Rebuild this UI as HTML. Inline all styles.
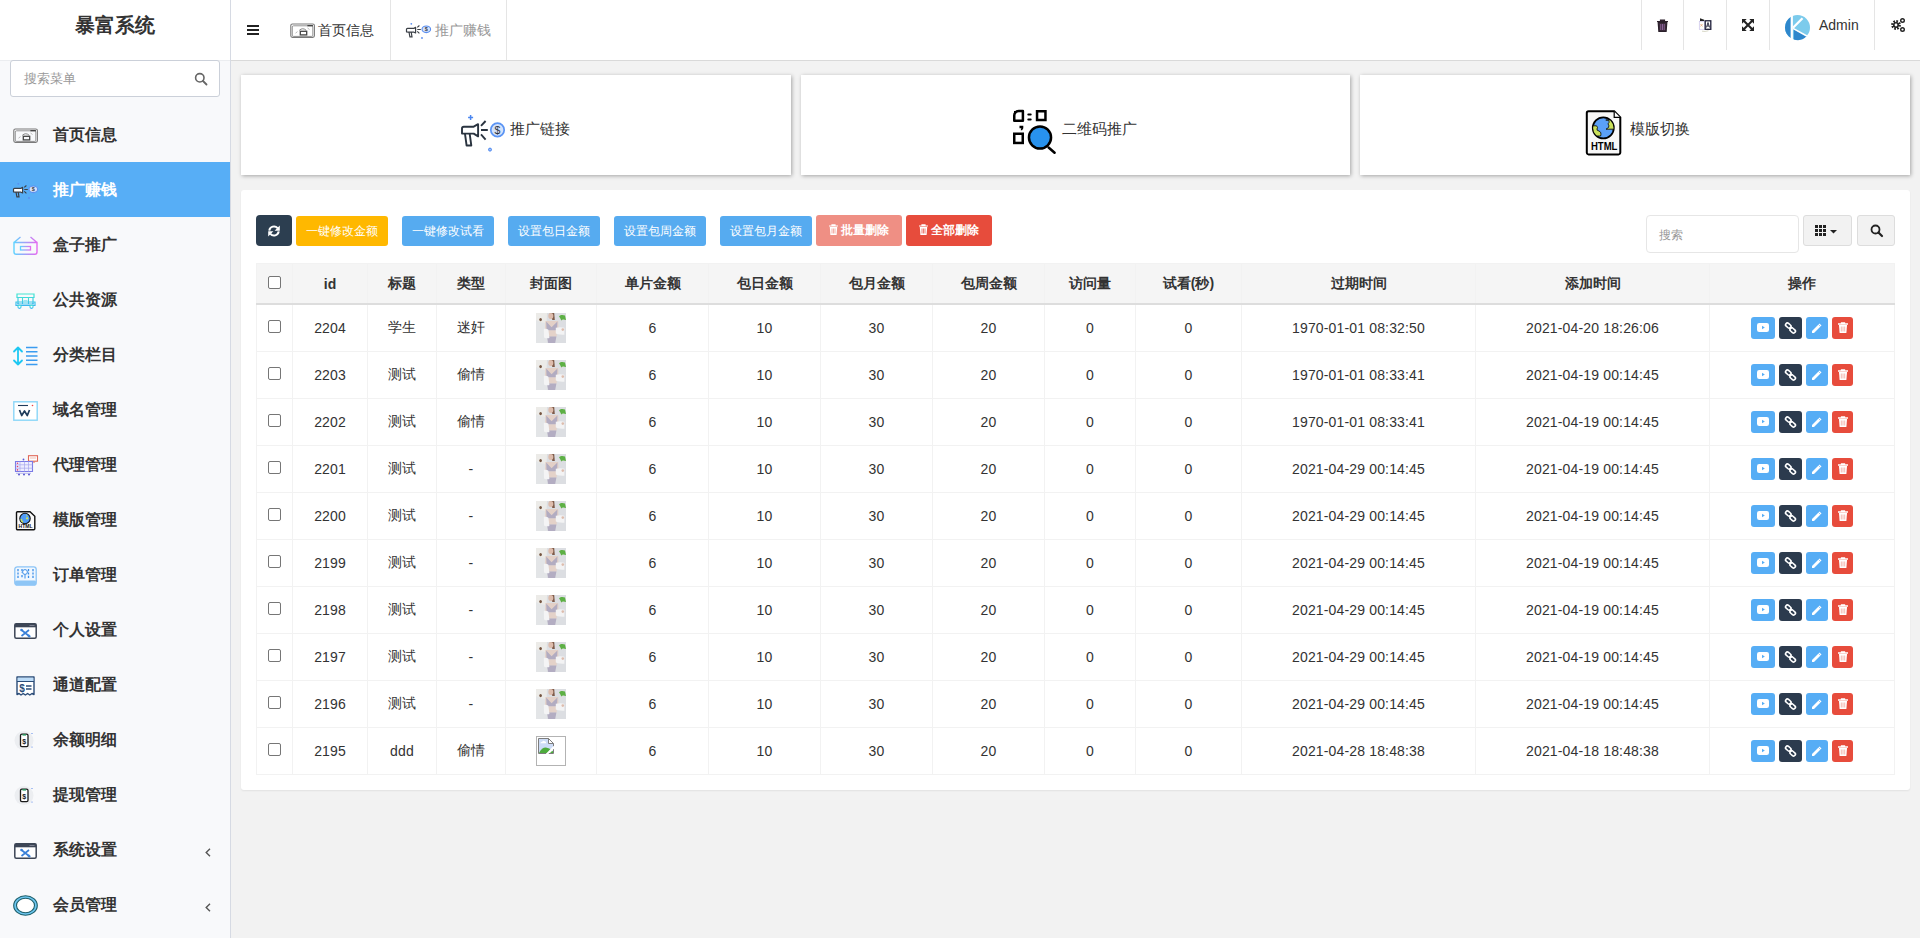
<!DOCTYPE html><html><head><meta charset="utf-8"><title>暴富系统</title><style>
*{box-sizing:border-box;margin:0;padding:0}
html,body{width:1920px;height:938px;overflow:hidden}
body{font-family:"Liberation Sans",sans-serif;background:#f2f2f2;color:#333;font-size:14px;position:relative}
.a{position:absolute}
svg{position:absolute;overflow:visible}
#side{position:absolute;left:0;top:0;width:231px;height:938px;background:#f8f9fb;border-right:1px solid #d6dae3}
#logo{position:absolute;left:0;top:0;width:230px;height:61px;border-bottom:1px solid #ebedf0;background:#fff;text-align:center;font-weight:bold;font-size:20px;line-height:50px;color:#333}
#msearch{position:absolute;left:10px;top:60px;width:210px;height:37px;border:1px solid #cbd0d9;border-radius:3px;background:#fff;font-size:13px;color:#999;padding-left:13px;line-height:35px}
.mi{position:absolute;left:0;width:230px;height:55px;font-size:16px;font-weight:bold;color:#333;line-height:55px;padding-left:53px;white-space:nowrap}
.mi.act{background:#57aef6;color:#fff}
.arr{position:absolute;left:203px;top:0;font-weight:normal;color:#666;font-size:13px}
#hdr{position:absolute;left:231px;top:0;width:1689px;height:61px;background:#fff;border-bottom:1px solid #d9d9d9}
.sep{position:absolute;top:0;width:1px;height:50px;background:#e5e5e5}
.tab{position:absolute;top:0;line-height:60px;font-size:14px;white-space:nowrap}
.card{position:absolute;top:75px;height:100px;background:#fff;box-shadow:1px 1px 4px rgba(0,0,0,.32)}
.card .lbl{position:absolute;font-size:15px;color:#333;top:44px;line-height:20px;white-space:nowrap}
#panel{position:absolute;left:241px;top:190px;width:1669px;height:600px;background:#fff;border-radius:3px;box-shadow:0 1px 2px rgba(0,0,0,.07)}
.btn{position:absolute;top:216px;height:30px;color:#fff;font-size:12px;line-height:30px;text-align:center;border-radius:3px;white-space:nowrap}
table{position:absolute;left:256px;top:263px;border-collapse:collapse;table-layout:fixed}
th,td{border:1px solid #f2f2f2;text-align:center;vertical-align:middle;padding:0;white-space:nowrap}
th{background:#f5f5f5;height:40px;padding-top:2px;font-weight:bold;font-size:14px;border-bottom:2px solid #dddddd;color:#333}
tr.r1 td{height:48px}
td{height:47px;font-size:14px;color:#333;letter-spacing:.15px}
.cb{display:inline-block;width:13px;height:13px;border:1px solid #767676;border-radius:2px;background:#fff;vertical-align:middle;position:relative;top:-3px}
.th{display:inline-block;width:30px;height:30px;vertical-align:middle;position:relative}
.tr{display:inline-block;width:9px;height:11px;margin-right:3px;vertical-align:-1px;position:relative}
.tr svg{left:0;top:0}
.ab{display:inline-block;width:24px;height:22px;border-radius:2px;vertical-align:middle;margin:0 1px;position:relative}
</style></head><body>
<div id="side"><div id="logo">暴富系统</div>
<div id="msearch">搜索菜单<svg style="left:183px;top:11px" width="14" height="14" viewBox="0 0 14 14"><circle cx="5.8" cy="5.8" r="4.2" fill="none" stroke="#666" stroke-width="1.6"/><path d="M9 9l3.5 3.5" stroke="#666" stroke-width="1.8" stroke-linecap="round"/></svg></div>
<div class="mi" style="top:107px"><svg style="left:12px;top:20px" width="27" height="18" viewBox="289 22 27 18"><rect x="290.8" y="24" width="23.6" height="13.4" rx="1.6" fill="none" stroke="#7a7a7a" stroke-width="1.1"/><rect x="292.3" y="25.8" width="20.5" height="10.6" rx="1.2" fill="none" stroke="#8a8a8a" stroke-width="0.9"/><rect x="307.4" y="25" width="5.5" height="1.3" fill="#444"/><path d="M299.3 30.3Q302.7 27.2 306.2 30.3" fill="none" stroke="#777" stroke-width="0.9"/><rect x="300.3" y="31.3" width="6.4" height="3.6" fill="none" stroke="#444" stroke-width="1.3"/><path d="M295.5 33.2l2-1.6M307.5 28l2 1.5" stroke="#aaa" stroke-width=".8"/></svg>首页信息</div>
<div class="mi act" style="top:162px"><svg style="left:12px;top:20px" width="27" height="18" viewBox="405 22 27 18"><path d="M406.5 31.8V29.3a1 1 0 0 1 1-1H414l1.6-1v5.6l-1.6-.7H408.5z" fill="#fff" stroke="#3a3f46" stroke-width="1.2" stroke-linejoin="round"/><path d="M409 32l.9 4.8h2.1l-.8-4.8" fill="none" stroke="#3a3f46" stroke-width="1.2"/><path d="M417.3 27.4l2.1-1.9M417.3 29.5h3.5M417.3 31.4l2.1 2" stroke="#3a3f46" stroke-width="1.1"/><ellipse cx="426.3" cy="29.3" rx="4.3" ry="3.3" fill="#d6e3fb" stroke="#5a8ef0" stroke-width="1.1"/><text x="426.3" y="31.3" font-size="5.5" font-weight="bold" text-anchor="middle" fill="#3a3f46" font-family="Liberation Sans">$</text><circle cx="411.3" cy="23.8" r=".9" fill="#5a8ef0"/><circle cx="422" cy="38" r=".9" fill="#5a8ef0"/></svg>推广赚钱</div>
<div class="mi" style="top:217px"><svg style="left:13px;top:19px" width="25" height="19" viewBox="0 0 25 19"><defs><linearGradient id="g1" x1="0" x2="1"><stop offset="0" stop-color="#5fd3ff"/><stop offset="1" stop-color="#e46af0"/></linearGradient></defs><path d="M1 6.5l6.5-5.5M24 6.5l-6.5-5.5M1 6.5h23v9.5a2.2 2.2 0 0 1-2.2 2.2H3.2A2.2 2.2 0 0 1 1 16z" fill="none" stroke="url(#g1)" stroke-width="1.4"/><rect x="7.5" y="10.5" width="10" height="3.5" fill="none" stroke="url(#g1)" stroke-width="1.3"/></svg>盒子推广</div>
<div class="mi" style="top:272px"><svg style="left:15px;top:21px" width="21" height="16" viewBox="0 0 21 16"><defs><linearGradient id="g2" x1="0" x2="0" y1="0" y2="1"><stop offset="0" stop-color="#44e6d0"/><stop offset="1" stop-color="#3cb8f0"/></linearGradient></defs><path d="M2 1h17v3.5H2zM3 4.5h15V11H3zM1 9h19v3.5H1z" fill="none" stroke="url(#g2)" stroke-width="1.2"/><path d="M7.5 4.5V11M13.5 4.5V11" stroke="url(#g2)" stroke-width="1.1"/><circle cx="4.5" cy="13.8" r="1.6" fill="#fff" stroke="url(#g2)" stroke-width="1.1"/><circle cx="16.5" cy="13.8" r="1.6" fill="#fff" stroke="url(#g2)" stroke-width="1.1"/><rect x="8.5" y="7" width="4" height="4" fill="#9ee3f2"/><circle cx="3" cy="10.8" r=".7" fill="#3cb8f0"/><circle cx="18" cy="10.8" r=".7" fill="#3cb8f0"/></svg>公共资源</div>
<div class="mi" style="top:327px"><svg style="left:13px;top:19px" width="25" height="20" viewBox="0 0 25 20"><path d="M5 1.5v17M1 5.5l4-4 4 4M1 14.5l4 4 4-4" fill="none" stroke="#1ec8f2" stroke-width="1.8" stroke-linecap="round" stroke-linejoin="round"/><path d="M13 1.5h11.5M13 5.8h11.5M13 10h11.5M13 14.2h11.5M13 18.5h11.5" stroke="#3a9cf0" stroke-width="1.5"/></svg>分类栏目</div>
<div class="mi" style="top:382px"><svg style="left:13px;top:19px" width="25" height="20" viewBox="0 0 25 20"><rect x="0.8" y="0.8" width="23.4" height="18.4" fill="#fff" stroke="#8ad6f8" stroke-width="1.4"/><path d="M5 4.5h10" stroke="#1f3b5a" stroke-width="1.1"/><circle cx="19.5" cy="4.5" r=".8" fill="#e44"/><path d="M6.5 9l2.2 5.5 2.8-4.5 2.8 4.5 2.2-5.5" fill="none" stroke="#1f3b5a" stroke-width="1.7" stroke-linejoin="round"/></svg>域名管理</div>
<div class="mi" style="top:437px"><svg style="left:14px;top:18px" width="24" height="21" viewBox="0 0 24 21"><rect x="14.5" y="0.7" width="9" height="5.5" fill="#fff" stroke="#e06858" stroke-width="1.1"/><path d="M16 3h6" stroke="#e9a090" stroke-width=".7"/><path d="M18 6.5v1.5M20 6.5v1.5" stroke="#e06858" stroke-width="1"/><path d="M1.5 6.5h17v10h-17z" fill="#eef" stroke="#7a7ae6" stroke-width="1.1"/><path d="M1.5 9.8h17M1.5 13.2h17M6 6.5v10M10.5 6.5v10M14.5 6.5v10" stroke="#a8a8ee" stroke-width="0.7"/><circle cx="3.5" cy="8.2" r=".8" fill="#e04070"/><circle cx="3.5" cy="11.5" r=".8" fill="#e04070"/><circle cx="3.5" cy="14.9" r=".8" fill="#e04070"/><circle cx="9.5" cy="4.5" r=".9" fill="#5a5ad8"/><circle cx="5" cy="19.5" r="1" fill="#5555d0"/><circle cx="10" cy="19.5" r="1" fill="#5555d0"/><circle cx="15" cy="19.5" r="1" fill="#5555d0"/><path d="M2 18.3h15" stroke="#9a9ae8" stroke-width=".7"/></svg>代理管理</div>
<div class="mi" style="top:492px"><svg style="left:15px;top:19px" width="21" height="20" viewBox="0 0 21 20"><path d="M1.5 1.8a1 1 0 0 1 1-1H15l4.8 4.5v12.4a1 1 0 0 1-1 1H2.5a1 1 0 0 1-1-1z" fill="#fafafa" stroke="#111" stroke-width="1.4"/><circle cx="10" cy="7.5" r="5.2" fill="#4f9cf8" stroke="#111" stroke-width="1.1"/><path d="M11 3.5c2 .3 1.5 2.5.5 2.5 2 0 2.5 2.2.8 2.6l-1.5-.6c0-1.5 1.4-1.2 1-2.4zM5.5 8c1.5-.5 2 .6 1.6 1.5 1 0 1.5 1.5 1 2.3C6.5 11.5 5.4 10 5.5 8z" fill="#c8e060"/><text x="10.5" y="17.3" font-size="5" font-weight="bold" text-anchor="middle" fill="#111" font-family="Liberation Sans">HTML</text></svg>模版管理</div>
<div class="mi" style="top:547px"><svg style="left:14px;top:19px" width="23" height="20" viewBox="0 0 23 20"><rect x="0.8" y="0.8" width="21.4" height="18.4" rx="2.5" fill="#f0f7fe" stroke="#8cc4f6" stroke-width="1.3"/><rect x="1" y="14.5" width="21" height="4.8" rx="1.5" fill="#8ec6f6"/><path d="M4 3v9M8 3v4M8 9v3M14.5 3v9M19 3v9" stroke="#3a8ee8" stroke-width="1.3" stroke-dasharray="2.2 1.2"/><circle cx="11" cy="6" r="2.4" fill="#fff" stroke="#3a8ee8" stroke-width="1"/><path d="M11 8.5v4" stroke="#3a8ee8" stroke-width="1"/></svg>订单管理</div>
<div class="mi" style="top:602px"><svg style="left:14px;top:21px" width="23" height="16" viewBox="0 0 23 16"><rect x="0.8" y="0.8" width="21.4" height="14.4" rx="1.5" fill="#fff" stroke="#3d4656" stroke-width="1.5"/><rect x="0.8" y="0.8" width="21.4" height="3.5" fill="#3d4656"/><path d="M15.5 2.5h5" stroke="#aab" stroke-width=".6"/><path d="M7.5 7l7.5 6M15 7l-7.5 6" stroke="#3a80d8" stroke-width="1.7"/><circle cx="7.5" cy="7" r="1.3" fill="#3a80d8"/><path d="M14 12l2 2" stroke="#3a80d8" stroke-width="2.4"/></svg>个人设置</div>
<div class="mi" style="top:657px"><svg style="left:16px;top:19px" width="19" height="20" viewBox="0 0 19 20"><path d="M1 1h17v17.5l-2-1-2.2 1.5-2.2-1.5-2.2 1.5-2.2-1.5-2.2 1.5L3 17.5 1 18.5z" fill="#fff" stroke="#2a4c78" stroke-width="1.4" stroke-linejoin="round"/><rect x="1.7" y="1.7" width="15.6" height="3.6" fill="#bcdcf8"/><path d="M1 5.5h17" stroke="#2a4c78" stroke-width="1"/><text x="6" y="15.5" font-size="10" font-weight="bold" text-anchor="middle" fill="#2a4c78" font-family="Liberation Sans">$</text><path d="M10 10h5.5M10 13h5.5" stroke="#2a4c78" stroke-width="1.4"/></svg>通道配置</div>
<div class="mi" style="top:712px"><svg style="left:14px;top:19px" width="22" height="19" viewBox="0 0 22 19"><circle cx="10" cy="9.5" r="9.5" fill="#eceef1"/><rect x="6.5" y="3.2" width="7.5" height="12.5" rx="1.4" fill="#fff" stroke="#1a1a1a" stroke-width="1.3"/><rect x="8.5" y="3.2" width="3.5" height="1.4" fill="#28a060"/><text x="10.3" y="12.8" font-size="7" font-weight="bold" text-anchor="middle" fill="#1a1a1a" font-family="Liberation Sans">$</text><circle cx="18" cy="2.5" r=".6" fill="#4a7be6"/><circle cx="18" cy="16" r=".6" fill="#4a7be6"/></svg>余额明细</div>
<div class="mi" style="top:767px"><svg style="left:14px;top:19px" width="22" height="19" viewBox="0 0 22 19"><circle cx="10" cy="9.5" r="9.5" fill="#eceef1"/><rect x="6.5" y="3.2" width="7.5" height="12.5" rx="1.4" fill="#fff" stroke="#1a1a1a" stroke-width="1.3"/><rect x="8.5" y="3.2" width="3.5" height="1.4" fill="#28a060"/><text x="10.3" y="12.8" font-size="7" font-weight="bold" text-anchor="middle" fill="#1a1a1a" font-family="Liberation Sans">$</text><circle cx="18" cy="2.5" r=".6" fill="#4a7be6"/><circle cx="18" cy="16" r=".6" fill="#4a7be6"/></svg>提现管理</div>
<div class="mi" style="top:822px"><svg style="left:14px;top:21px" width="23" height="16" viewBox="0 0 23 16"><rect x="0.8" y="0.8" width="21.4" height="14.4" rx="1.5" fill="#fff" stroke="#3d4656" stroke-width="1.5"/><rect x="0.8" y="0.8" width="21.4" height="3.5" fill="#3d4656"/><path d="M15.5 2.5h5" stroke="#aab" stroke-width=".6"/><path d="M7.5 7l7.5 6M15 7l-7.5 6" stroke="#3a80d8" stroke-width="1.7"/><circle cx="7.5" cy="7" r="1.3" fill="#3a80d8"/><path d="M14 12l2 2" stroke="#3a80d8" stroke-width="2.4"/></svg>系统设置<svg style="left:205px;top:26px" width="6" height="9" viewBox="0 0 6 9"><path d="M5 .8L1.2 4.5 5 8.2" fill="none" stroke="#555" stroke-width="1.4"/></svg></div>
<div class="mi" style="top:877px"><svg style="left:13px;top:18px" width="25" height="21" viewBox="0 0 25 21"><ellipse cx="12.5" cy="10.5" rx="11.8" ry="9.8" fill="#6cc6f0" stroke="#1f5f6a" stroke-width="1.1"/><ellipse cx="12.5" cy="10.5" rx="9" ry="7.2" fill="#fff" stroke="#1f5f6a" stroke-width="1.1"/></svg>会员管理<svg style="left:205px;top:26px" width="6" height="9" viewBox="0 0 6 9"><path d="M5 .8L1.2 4.5 5 8.2" fill="none" stroke="#555" stroke-width="1.4"/></svg></div>
</div>
<div id="hdr"></div>
<svg style="left:247px;top:25px" width="12" height="10" viewBox="0 0 12 10"><path d="M0 1h12M0 5h12M0 9h12" stroke="#222" stroke-width="1.9"/></svg>
<svg style="left:289px;top:22px" width="27" height="18" viewBox="289 22 27 18"><rect x="290.8" y="24" width="23.6" height="13.4" rx="1.6" fill="none" stroke="#7a7a7a" stroke-width="1.1"/><rect x="292.3" y="25.8" width="20.5" height="10.6" rx="1.2" fill="none" stroke="#8a8a8a" stroke-width="0.9"/><rect x="307.4" y="25" width="5.5" height="1.3" fill="#444"/><path d="M299.3 30.3Q302.7 27.2 306.2 30.3" fill="none" stroke="#777" stroke-width="0.9"/><rect x="300.3" y="31.3" width="6.4" height="3.6" fill="none" stroke="#444" stroke-width="1.3"/><path d="M295.5 33.2l2-1.6M307.5 28l2 1.5" stroke="#aaa" stroke-width=".8"/></svg>
<div class="tab" style="left:318px;color:#333">首页信息</div>
<div class="sep" style="left:390px;height:60px"></div>
<svg style="left:405px;top:22px" width="27" height="18" viewBox="405 22 27 18"><path d="M406.5 31.8V29.3a1 1 0 0 1 1-1H414l1.6-1v5.6l-1.6-.7H408.5z" fill="none" stroke="#3a3f46" stroke-width="1.2" stroke-linejoin="round"/><path d="M409 32l.9 4.8h2.1l-.8-4.8" fill="none" stroke="#3a3f46" stroke-width="1.2"/><path d="M417.3 27.4l2.1-1.9M417.3 29.5h3.5M417.3 31.4l2.1 2" stroke="#3a3f46" stroke-width="1.1"/><ellipse cx="426.3" cy="29.3" rx="4.3" ry="3.3" fill="#d6e3fb" stroke="#5a8ef0" stroke-width="1.1"/><text x="426.3" y="31.3" font-size="5.5" font-weight="bold" text-anchor="middle" fill="#3a3f46" font-family="Liberation Sans">$</text><circle cx="411.3" cy="23.8" r=".9" fill="#5a8ef0"/><circle cx="422" cy="38" r=".9" fill="#5a8ef0"/></svg>
<div class="tab" style="left:435px;color:#999">推广赚钱</div>
<div class="sep" style="left:506px;height:60px"></div>
<div class="sep" style="left:1641px"></div>
<div class="sep" style="left:1683px"></div>
<div class="sep" style="left:1726px"></div>
<div class="sep" style="left:1769px"></div>
<div class="sep" style="left:1874px"></div>
<svg style="left:1657px;top:19px" width="11" height="13" viewBox="0 0 11 13"><path d="M0 2.5h11M3.5 2.5V1h4v1.5M1.2 3.5h8.6l-.7 9H1.9z" fill="#3a2a3a" stroke="#2a1f2a" stroke-width="1.2"/><path d="M3.8 5v6M5.5 5v6M7.2 5v6" stroke="#a070b0" stroke-width=".8"/></svg>
<svg style="left:1697px;top:16px" width="17" height="18" viewBox="1697 16 17 18"><rect x="1699.3" y="21.3" width="5.5" height="8" fill="#fff" stroke="#c9c2ea" stroke-width=".7"/><path d="M1700.5 24l2 2.5M1702.5 24l-2 2.5" stroke="#e7a070" stroke-width=".7"/><path d="M1700 18.2l4.2 1.6v1.2H1700z" fill="#222"/><rect x="1705.2" y="20.8" width="5.6" height="8.5" fill="#fff" stroke="#1d1d38" stroke-width="1.3"/><path d="M1706.4 27.5l1.6-5 1.6 5M1707 26h2" fill="none" stroke="#1d1d38" stroke-width=".9"/><path d="M1702 31.2q3 .8 6.5-.5" fill="none" stroke="#c8c8b0" stroke-width=".7"/></svg>
<svg style="left:1742px;top:19px" width="12" height="12" viewBox="0 0 14 14"><path d="M1.5 1.5l11 11M12.5 1.5l-11 11" stroke="#222" stroke-width="2.4"/><path d="M0 0h5.5L0 5.5zM14 0H8.5l5.5 5.5zM0 14h5.5L0 8.5zM14 14H8.5l5.5-5.5z" fill="#222"/></svg>
<svg style="left:1785px;top:15px" width="25" height="25" viewBox="0 0 25 25"><circle cx="12.5" cy="12.5" r="12.5" fill="#7ccbec"/><path d="M5.8 1.95A12.5 12.5 0 0 0 5.8 23.05z" fill="#2e87cc"/><path d="M8.8 14.2L21.5 21.3A12.5 12.5 0 0 1 8.8 24.45z" fill="#2e87cc"/><path d="M6.8 1v23.5" stroke="#fff" stroke-width="2.2"/><path d="M8 12.8L17.5 3.2" stroke="#fff" stroke-width="2.2"/><path d="M8 13.4L21.8 21" stroke="#fff" stroke-width="1.6"/></svg>
<div class="tab" style="left:1819px;top:-5px;color:#333;font-size:14px">Admin</div>
<svg style="left:1890px;top:17px" width="16" height="16" viewBox="0 0 16 16"><circle cx="6" cy="8" r="3.6" fill="none" stroke="#222" stroke-width="2.6" stroke-dasharray="1.6 1.2"/><circle cx="6" cy="8" r="2.2" fill="none" stroke="#222" stroke-width="1.6"/><circle cx="12.5" cy="3.5" r="1.8" fill="none" stroke="#222" stroke-width="1.4"/><circle cx="12.5" cy="12.5" r="1.8" fill="none" stroke="#222" stroke-width="1.4"/></svg>
<div class="card" style="left:241px;width:550px"></div>
<svg style="left:459px;top:113px" width="48" height="40" viewBox="459 113 48 40"><path d="M462 133.6V128.5a1.8 1.8 0 0 1 1.8-1.8h9.9l4.4-2.5v12.2l-4.4-2.8z" fill="none" stroke="#2a3440" stroke-width="1.9" stroke-linejoin="round"/><path d="M465 133.8l1.6 11.7h4.7l-1.6-11.7" fill="none" stroke="#2a3440" stroke-width="1.9" stroke-linejoin="round"/><path d="M481 125.9l4.6-4.9M481 130h6.8M481 134.4l4.6 5.2" stroke="#2a3440" stroke-width="1.9"/><circle cx="497.5" cy="129.9" r="6.7" fill="#d3e2fb" stroke="#5a94f4" stroke-width="1.7"/><text x="497.5" y="133.6" font-size="10.5" text-anchor="middle" fill="#2a3440" font-family="Liberation Sans">$</text><path d="M470.6 115v5M468.1 117.4h5" stroke="#4a86f0" stroke-width="1.5"/><circle cx="490" cy="149.6" r="1.5" fill="#9ec0f8" stroke="#4a86f0" stroke-width="1"/></svg>
<div class="card" style="left:801px;width:549px"></div>
<svg style="left:1012px;top:109px" width="46" height="46" viewBox="-1 -1 46 46"><path d="M1.25 10.75V5.5A4.5 4.5 0 0 1 5.75 1H9.9v9.75z" fill="none" stroke="#000" stroke-width="2.5" stroke-linejoin="round"/><path d="M1 6A5 5 0 0 1 6 1L1 1z" fill="#000"/><path d="M15.3 4.6h2.4M15.3 9.4h2.4" stroke="#000" stroke-width="2" stroke-linecap="round"/><rect x="24.05" y="1.25" width="8.4" height="8.75" fill="none" stroke="#000" stroke-width="2.5"/><path d="M6.5 15.7h3.8v2.6l-1.2 2h-1.4l.6-2H6.5z" fill="#000"/><rect x="1.25" y="23.75" width="8.5" height="9.2" fill="none" stroke="#000" stroke-width="2.5"/><circle cx="27" cy="27.5" r="11.05" fill="#2892ee" stroke="#000" stroke-width="2.5"/><path d="M35.6 37.5l6 5.2" stroke="#000" stroke-width="2.5" stroke-linecap="round"/></svg>
<div class="card" style="left:1360px;width:550px"></div>
<svg style="left:1584px;top:109px" width="40" height="48" viewBox="1584 109 40 48"><path d="M1586.8 113a1.8 1.8 0 0 1 1.8-1.8h25.6l6.1 6.1v35.3a1.8 1.8 0 0 1-1.8 1.8h-29.9a1.8 1.8 0 0 1-1.8-1.8z" fill="#f7f7f7" stroke="#000" stroke-width="2"/><path d="M1614.2 111.5v5.8h5.8" fill="#fff" stroke="#000" stroke-width="1.2"/><circle cx="1603.3" cy="127.9" r="10.5" fill="#5aa0f8" stroke="#000" stroke-width="1.8"/><clipPath id="gcl"><circle cx="1603.3" cy="127.9" r="10.2"/></clipPath><g clip-path="url(#gcl)"><path d="M1605.8 120Q1609.5 119.8 1609 122.5Q1607 124 1608.8 125.2Q1610 127.5 1606 129.2L1616 129.2L1616 120z" fill="#c9e05a" stroke="#111" stroke-width=".9"/><path d="M1591 125.8L1596.5 125.8Q1598.3 127.5 1597 129Q1596.6 130.6 1599 131Q1601.8 132.2 1600.6 136L1591 136z" fill="#c9e05a" stroke="#111" stroke-width=".9"/></g><text x="1604.2" y="150.4" font-size="10" font-weight="bold" text-anchor="middle" fill="#000" font-family="Liberation Sans" textLength="26.5" lengthAdjust="spacingAndGlyphs">HTML</text></svg>
<div class="a" style="left:1630px;top:119px;font-size:15px;line-height:20px;white-space:nowrap">模版切换</div>
<div class="a" style="left:1062px;top:119px;font-size:15px;line-height:20px;white-space:nowrap">二维码推广</div>
<div class="a" style="left:510px;top:119px;font-size:15px;line-height:20px;white-space:nowrap">推广链接</div>
<div id="panel"></div>
<div class="btn" style="left:256px;top:215px;width:36px;height:31px;background:#2c3e50;border-radius:4px"><svg style="left:12px;top:10px" width="12" height="12" viewBox="0 0 12 12"><path d="M1.3 5.6A4.7 4.7 0 0 1 9.6 3.2M10.7 6.4A4.7 4.7 0 0 1 2.4 8.8" fill="none" stroke="#fff" stroke-width="2"/><path d="M11.8 0.6V5.8H6.6zM0.2 11.4V6.2H5.4z" fill="#fff"/></svg></div>
<div class="btn" style="left:296px;width:92px;background:#ffb800;top:216px;height:30px;line-height:30px">一键修改金额</div>
<div class="btn" style="left:402px;width:92px;background:#56abf0;top:216px;height:30px;line-height:30px">一键修改试看</div>
<div class="btn" style="left:508px;width:92px;background:#56abf0;top:216px;height:30px;line-height:30px">设置包日金额</div>
<div class="btn" style="left:614px;width:92px;background:#56abf0;top:216px;height:30px;line-height:30px">设置包周金额</div>
<div class="btn" style="left:720px;width:92px;background:#56abf0;top:216px;height:30px;line-height:30px">设置包月金额</div>
<div class="btn" style="left:816px;width:86px;background:#ef8f84;top:215px;height:31px;line-height:31px"><b style="font-weight:bold"><b class="tr"><svg width="9" height="11" viewBox="0 0 9 11"><path d="M0 2h9M3 2V.8h3V2" stroke="#fff" stroke-width="1.2" fill="none"/><path d="M.8 3h7.4l-.6 8H1.4z" fill="#fff"/><path d="M3 4.5v5M4.5 4.5v5M6 4.5v5" stroke="#ef8f84" stroke-width=".7"/></svg></b>批量删除</b></div>
<div class="btn" style="left:906px;width:86px;background:#e74c3c;top:215px;height:31px;line-height:31px"><b style="font-weight:bold"><b class="tr"><svg width="9" height="11" viewBox="0 0 9 11"><path d="M0 2h9M3 2V.8h3V2" stroke="#fff" stroke-width="1.2" fill="none"/><path d="M.8 3h7.4l-.6 8H1.4z" fill="#fff"/><path d="M3 4.5v5M4.5 4.5v5M6 4.5v5" stroke="#e74c3c" stroke-width=".7"/></svg></b>全部删除</b></div>
<div class="a" style="left:1646px;top:215px;width:153px;height:38px;border:1px solid #e6e6e6;border-radius:4px;background:#fff;font-size:12px;color:#999;line-height:38px;padding-left:12px">搜索</div>
<div class="a" style="left:1803px;top:215px;width:49px;height:31px;border:1px solid #ddd;border-radius:3px;background:#f2f2f2"><svg style="left:11px;top:9px" width="24" height="12" viewBox="0 0 24 12"><path d="M0 0h3v3H0zM4 0h3v3H4zM8 0h3v3H8zM0 4h3v3H0zM4 4h3v3H4zM8 4h3v3H8zM0 8h3v3H0zM4 8h3v3H4zM8 8h3v3H8z" fill="#222"/><path d="M15 5h7l-3.5 3.5z" fill="#222"/></svg></div>
<div class="a" style="left:1857px;top:215px;width:38px;height:31px;border:1px solid #ddd;border-radius:3px;background:#f2f2f2"><svg style="left:12px;top:8px" width="13" height="13" viewBox="0 0 13 13"><circle cx="5.5" cy="5.5" r="4" fill="none" stroke="#222" stroke-width="1.8"/><path d="M8.5 8.5l3.5 3.5" stroke="#222" stroke-width="2.2" stroke-linecap="round"/></svg></div>
<table><colgroup><col style="width:36px"><col style="width:75px"><col style="width:69px"><col style="width:69px"><col style="width:91px"><col style="width:112px"><col style="width:112px"><col style="width:112px"><col style="width:112px"><col style="width:91px"><col style="width:106px"><col style="width:234px"><col style="width:234px"><col style="width:185px"></colgroup>
<tr><th><span class="cb"></span></th><th>id</th><th>标题</th><th>类型</th><th>封面图</th><th>单片金额</th><th>包日金额</th><th>包月金额</th><th>包周金额</th><th>访问量</th><th>试看(秒)</th><th>过期时间</th><th>添加时间</th><th>操作</th></tr>
<tr class="r1"><td><span class="cb"></span></td><td>2204</td><td>学生</td><td>迷奸</td><td></td><td>6</td><td>10</td><td>30</td><td>20</td><td>0</td><td>0</td><td>1970-01-01 08:32:50</td><td>2021-04-20 18:26:06</td><td></td></tr>
<tr><td><span class="cb"></span></td><td>2203</td><td>测试</td><td>偷情</td><td></td><td>6</td><td>10</td><td>30</td><td>20</td><td>0</td><td>0</td><td>1970-01-01 08:33:41</td><td>2021-04-19 00:14:45</td><td></td></tr>
<tr><td><span class="cb"></span></td><td>2202</td><td>测试</td><td>偷情</td><td></td><td>6</td><td>10</td><td>30</td><td>20</td><td>0</td><td>0</td><td>1970-01-01 08:33:41</td><td>2021-04-19 00:14:45</td><td></td></tr>
<tr><td><span class="cb"></span></td><td>2201</td><td>测试</td><td>-</td><td></td><td>6</td><td>10</td><td>30</td><td>20</td><td>0</td><td>0</td><td>2021-04-29 00:14:45</td><td>2021-04-19 00:14:45</td><td></td></tr>
<tr><td><span class="cb"></span></td><td>2200</td><td>测试</td><td>-</td><td></td><td>6</td><td>10</td><td>30</td><td>20</td><td>0</td><td>0</td><td>2021-04-29 00:14:45</td><td>2021-04-19 00:14:45</td><td></td></tr>
<tr><td><span class="cb"></span></td><td>2199</td><td>测试</td><td>-</td><td></td><td>6</td><td>10</td><td>30</td><td>20</td><td>0</td><td>0</td><td>2021-04-29 00:14:45</td><td>2021-04-19 00:14:45</td><td></td></tr>
<tr><td><span class="cb"></span></td><td>2198</td><td>测试</td><td>-</td><td></td><td>6</td><td>10</td><td>30</td><td>20</td><td>0</td><td>0</td><td>2021-04-29 00:14:45</td><td>2021-04-19 00:14:45</td><td></td></tr>
<tr><td><span class="cb"></span></td><td>2197</td><td>测试</td><td>-</td><td></td><td>6</td><td>10</td><td>30</td><td>20</td><td>0</td><td>0</td><td>2021-04-29 00:14:45</td><td>2021-04-19 00:14:45</td><td></td></tr>
<tr><td><span class="cb"></span></td><td>2196</td><td>测试</td><td>-</td><td></td><td>6</td><td>10</td><td>30</td><td>20</td><td>0</td><td>0</td><td>2021-04-29 00:14:45</td><td>2021-04-19 00:14:45</td><td></td></tr>
<tr><td><span class="cb"></span></td><td>2195</td><td>ddd</td><td>偷情</td><td></td><td>6</td><td>10</td><td>30</td><td>20</td><td>0</td><td>0</td><td>2021-04-28 18:48:38</td><td>2021-04-18 18:48:38</td><td></td></tr>
</table>
<svg style="left:536px;top:313px" width="30" height="30" viewBox="0 0 30 30"><defs><filter id="bl" x="-5%" y="-5%" width="110%" height="110%"><feGaussianBlur stdDeviation=".5"/></filter><clipPath id="cp"><rect width="30" height="30"/></clipPath></defs><g clip-path="url(#cp)"><rect width="30" height="30" fill="#dcdee2"/><g filter="url(#bl)"><rect x="0" y="0" width="11" height="30" fill="#e3e5e7"/><path d="M0 0h11l-1 10c-3 0-7-1-10-3z" fill="#ecebe8"/><ellipse cx="4.6" cy="6.6" rx="1.3" ry="1.7" fill="#74543f"/><path d="M23 3.2c1.5-1.4 3.8-1.8 6-.6l1 4.4c-1.3-.3-2.4-.8-3.3-.4l-1.4 1-1.2-2.5z" fill="#5db044"/><path d="M13.6 0h4.6l.6 7h-2.4z" fill="#7e5a48"/><ellipse cx="14.8" cy="3.1" rx="2.5" ry="3" fill="#ddbcad"/><path d="M9.4 8h12.8l.4 9.6H9z" fill="#e3d0c7"/><path d="M10.2 8.6l5.4 5.6 5.8-5.6-.4 8.8H10.6z" fill="#b2acc1"/><path d="M10.5 17.5h10.2v6.2H10.5z" fill="#e4d2c9"/><path d="M11 23.6h9.4l-1.2 6.4h-7z" fill="#b3adc2"/><path d="M7.8 16c1.8-.6 3.4-.3 4.6.7l1 8.3c-1.8.6-4 .4-5.4-.6z" fill="#f4f4f5"/><path d="M19.8 14.8c2.8-.7 5.7-.9 8.6 0v7c-2.8 0-5.8-.4-8.6-1.4z" fill="#f3f3f4"/><circle cx="26.8" cy="16.6" r="1.3" fill="#ddbcad"/></g></g></svg>
<div class="a" style="left:1751px;top:317px;width:24px;height:22px;background:#56adf5;border-radius:3px"><svg style="left:6px;top:6px" width="12" height="9" viewBox="0 0 12 9"><rect x="0" y="0" width="12" height="9" rx="2.2" fill="#fff"/><path d="M5 2.8v3.4l2.8-1.7z" fill="#56adf5"/></svg></div>
<div class="a" style="left:1779px;top:317px;width:23px;height:22px;background:#2c3b4e;border-radius:3px"><svg style="left:5px;top:5px" width="13" height="12" viewBox="0 0 13 12"><rect x="1.3" y="1.8" width="6" height="3.6" rx="1.8" transform="rotate(40 4.3 3.6)" fill="none" stroke="#fff" stroke-width="1.6"/><rect x="5.7" y="6.6" width="6" height="3.6" rx="1.8" transform="rotate(40 8.7 8.4)" fill="none" stroke="#fff" stroke-width="1.6"/><path d="M5.6 4.9l1.8 1.9" stroke="#fff" stroke-width="1.4"/></svg></div>
<div class="a" style="left:1806px;top:317px;width:22px;height:22px;background:#56adf5;border-radius:3px"><svg style="left:5px;top:5px" width="12" height="12" viewBox="0 0 12 12"><path d="M1 9l7.5-7.5 2 2L3 11H1z" fill="#fff"/><path d="M7.5 2.5l2 2" stroke="#56adf5" stroke-width=".6"/></svg></div>
<div class="a" style="left:1832px;top:317px;width:21px;height:22px;background:#e74c3c;border-radius:3px"><svg style="left:6px;top:5px" width="10" height="11" viewBox="0 0 10 11"><path d="M0 2h10M3.5 2V.8h3V2" stroke="#fff" stroke-width="1.3" fill="none"/><path d="M1 3h8l-.6 8H1.6z" fill="#fff"/><path d="M3.3 4.5v5M5 4.5v5M6.7 4.5v5" stroke="#f0a8a0" stroke-width=".8"/></svg></div>
<svg style="left:536px;top:360px" width="30" height="30" viewBox="0 0 30 30"><defs><filter id="bl" x="-5%" y="-5%" width="110%" height="110%"><feGaussianBlur stdDeviation=".5"/></filter><clipPath id="cp"><rect width="30" height="30"/></clipPath></defs><g clip-path="url(#cp)"><rect width="30" height="30" fill="#dcdee2"/><g filter="url(#bl)"><rect x="0" y="0" width="11" height="30" fill="#e3e5e7"/><path d="M0 0h11l-1 10c-3 0-7-1-10-3z" fill="#ecebe8"/><ellipse cx="4.6" cy="6.6" rx="1.3" ry="1.7" fill="#74543f"/><path d="M23 3.2c1.5-1.4 3.8-1.8 6-.6l1 4.4c-1.3-.3-2.4-.8-3.3-.4l-1.4 1-1.2-2.5z" fill="#5db044"/><path d="M13.6 0h4.6l.6 7h-2.4z" fill="#7e5a48"/><ellipse cx="14.8" cy="3.1" rx="2.5" ry="3" fill="#ddbcad"/><path d="M9.4 8h12.8l.4 9.6H9z" fill="#e3d0c7"/><path d="M10.2 8.6l5.4 5.6 5.8-5.6-.4 8.8H10.6z" fill="#b2acc1"/><path d="M10.5 17.5h10.2v6.2H10.5z" fill="#e4d2c9"/><path d="M11 23.6h9.4l-1.2 6.4h-7z" fill="#b3adc2"/><path d="M7.8 16c1.8-.6 3.4-.3 4.6.7l1 8.3c-1.8.6-4 .4-5.4-.6z" fill="#f4f4f5"/><path d="M19.8 14.8c2.8-.7 5.7-.9 8.6 0v7c-2.8 0-5.8-.4-8.6-1.4z" fill="#f3f3f4"/><circle cx="26.8" cy="16.6" r="1.3" fill="#ddbcad"/></g></g></svg>
<div class="a" style="left:1751px;top:364px;width:24px;height:22px;background:#56adf5;border-radius:3px"><svg style="left:6px;top:6px" width="12" height="9" viewBox="0 0 12 9"><rect x="0" y="0" width="12" height="9" rx="2.2" fill="#fff"/><path d="M5 2.8v3.4l2.8-1.7z" fill="#56adf5"/></svg></div>
<div class="a" style="left:1779px;top:364px;width:23px;height:22px;background:#2c3b4e;border-radius:3px"><svg style="left:5px;top:5px" width="13" height="12" viewBox="0 0 13 12"><rect x="1.3" y="1.8" width="6" height="3.6" rx="1.8" transform="rotate(40 4.3 3.6)" fill="none" stroke="#fff" stroke-width="1.6"/><rect x="5.7" y="6.6" width="6" height="3.6" rx="1.8" transform="rotate(40 8.7 8.4)" fill="none" stroke="#fff" stroke-width="1.6"/><path d="M5.6 4.9l1.8 1.9" stroke="#fff" stroke-width="1.4"/></svg></div>
<div class="a" style="left:1806px;top:364px;width:22px;height:22px;background:#56adf5;border-radius:3px"><svg style="left:5px;top:5px" width="12" height="12" viewBox="0 0 12 12"><path d="M1 9l7.5-7.5 2 2L3 11H1z" fill="#fff"/><path d="M7.5 2.5l2 2" stroke="#56adf5" stroke-width=".6"/></svg></div>
<div class="a" style="left:1832px;top:364px;width:21px;height:22px;background:#e74c3c;border-radius:3px"><svg style="left:6px;top:5px" width="10" height="11" viewBox="0 0 10 11"><path d="M0 2h10M3.5 2V.8h3V2" stroke="#fff" stroke-width="1.3" fill="none"/><path d="M1 3h8l-.6 8H1.6z" fill="#fff"/><path d="M3.3 4.5v5M5 4.5v5M6.7 4.5v5" stroke="#f0a8a0" stroke-width=".8"/></svg></div>
<svg style="left:536px;top:407px" width="30" height="30" viewBox="0 0 30 30"><defs><filter id="bl" x="-5%" y="-5%" width="110%" height="110%"><feGaussianBlur stdDeviation=".5"/></filter><clipPath id="cp"><rect width="30" height="30"/></clipPath></defs><g clip-path="url(#cp)"><rect width="30" height="30" fill="#dcdee2"/><g filter="url(#bl)"><rect x="0" y="0" width="11" height="30" fill="#e3e5e7"/><path d="M0 0h11l-1 10c-3 0-7-1-10-3z" fill="#ecebe8"/><ellipse cx="4.6" cy="6.6" rx="1.3" ry="1.7" fill="#74543f"/><path d="M23 3.2c1.5-1.4 3.8-1.8 6-.6l1 4.4c-1.3-.3-2.4-.8-3.3-.4l-1.4 1-1.2-2.5z" fill="#5db044"/><path d="M13.6 0h4.6l.6 7h-2.4z" fill="#7e5a48"/><ellipse cx="14.8" cy="3.1" rx="2.5" ry="3" fill="#ddbcad"/><path d="M9.4 8h12.8l.4 9.6H9z" fill="#e3d0c7"/><path d="M10.2 8.6l5.4 5.6 5.8-5.6-.4 8.8H10.6z" fill="#b2acc1"/><path d="M10.5 17.5h10.2v6.2H10.5z" fill="#e4d2c9"/><path d="M11 23.6h9.4l-1.2 6.4h-7z" fill="#b3adc2"/><path d="M7.8 16c1.8-.6 3.4-.3 4.6.7l1 8.3c-1.8.6-4 .4-5.4-.6z" fill="#f4f4f5"/><path d="M19.8 14.8c2.8-.7 5.7-.9 8.6 0v7c-2.8 0-5.8-.4-8.6-1.4z" fill="#f3f3f4"/><circle cx="26.8" cy="16.6" r="1.3" fill="#ddbcad"/></g></g></svg>
<div class="a" style="left:1751px;top:411px;width:24px;height:22px;background:#56adf5;border-radius:3px"><svg style="left:6px;top:6px" width="12" height="9" viewBox="0 0 12 9"><rect x="0" y="0" width="12" height="9" rx="2.2" fill="#fff"/><path d="M5 2.8v3.4l2.8-1.7z" fill="#56adf5"/></svg></div>
<div class="a" style="left:1779px;top:411px;width:23px;height:22px;background:#2c3b4e;border-radius:3px"><svg style="left:5px;top:5px" width="13" height="12" viewBox="0 0 13 12"><rect x="1.3" y="1.8" width="6" height="3.6" rx="1.8" transform="rotate(40 4.3 3.6)" fill="none" stroke="#fff" stroke-width="1.6"/><rect x="5.7" y="6.6" width="6" height="3.6" rx="1.8" transform="rotate(40 8.7 8.4)" fill="none" stroke="#fff" stroke-width="1.6"/><path d="M5.6 4.9l1.8 1.9" stroke="#fff" stroke-width="1.4"/></svg></div>
<div class="a" style="left:1806px;top:411px;width:22px;height:22px;background:#56adf5;border-radius:3px"><svg style="left:5px;top:5px" width="12" height="12" viewBox="0 0 12 12"><path d="M1 9l7.5-7.5 2 2L3 11H1z" fill="#fff"/><path d="M7.5 2.5l2 2" stroke="#56adf5" stroke-width=".6"/></svg></div>
<div class="a" style="left:1832px;top:411px;width:21px;height:22px;background:#e74c3c;border-radius:3px"><svg style="left:6px;top:5px" width="10" height="11" viewBox="0 0 10 11"><path d="M0 2h10M3.5 2V.8h3V2" stroke="#fff" stroke-width="1.3" fill="none"/><path d="M1 3h8l-.6 8H1.6z" fill="#fff"/><path d="M3.3 4.5v5M5 4.5v5M6.7 4.5v5" stroke="#f0a8a0" stroke-width=".8"/></svg></div>
<svg style="left:536px;top:454px" width="30" height="30" viewBox="0 0 30 30"><defs><filter id="bl" x="-5%" y="-5%" width="110%" height="110%"><feGaussianBlur stdDeviation=".5"/></filter><clipPath id="cp"><rect width="30" height="30"/></clipPath></defs><g clip-path="url(#cp)"><rect width="30" height="30" fill="#dcdee2"/><g filter="url(#bl)"><rect x="0" y="0" width="11" height="30" fill="#e3e5e7"/><path d="M0 0h11l-1 10c-3 0-7-1-10-3z" fill="#ecebe8"/><ellipse cx="4.6" cy="6.6" rx="1.3" ry="1.7" fill="#74543f"/><path d="M23 3.2c1.5-1.4 3.8-1.8 6-.6l1 4.4c-1.3-.3-2.4-.8-3.3-.4l-1.4 1-1.2-2.5z" fill="#5db044"/><path d="M13.6 0h4.6l.6 7h-2.4z" fill="#7e5a48"/><ellipse cx="14.8" cy="3.1" rx="2.5" ry="3" fill="#ddbcad"/><path d="M9.4 8h12.8l.4 9.6H9z" fill="#e3d0c7"/><path d="M10.2 8.6l5.4 5.6 5.8-5.6-.4 8.8H10.6z" fill="#b2acc1"/><path d="M10.5 17.5h10.2v6.2H10.5z" fill="#e4d2c9"/><path d="M11 23.6h9.4l-1.2 6.4h-7z" fill="#b3adc2"/><path d="M7.8 16c1.8-.6 3.4-.3 4.6.7l1 8.3c-1.8.6-4 .4-5.4-.6z" fill="#f4f4f5"/><path d="M19.8 14.8c2.8-.7 5.7-.9 8.6 0v7c-2.8 0-5.8-.4-8.6-1.4z" fill="#f3f3f4"/><circle cx="26.8" cy="16.6" r="1.3" fill="#ddbcad"/></g></g></svg>
<div class="a" style="left:1751px;top:458px;width:24px;height:22px;background:#56adf5;border-radius:3px"><svg style="left:6px;top:6px" width="12" height="9" viewBox="0 0 12 9"><rect x="0" y="0" width="12" height="9" rx="2.2" fill="#fff"/><path d="M5 2.8v3.4l2.8-1.7z" fill="#56adf5"/></svg></div>
<div class="a" style="left:1779px;top:458px;width:23px;height:22px;background:#2c3b4e;border-radius:3px"><svg style="left:5px;top:5px" width="13" height="12" viewBox="0 0 13 12"><rect x="1.3" y="1.8" width="6" height="3.6" rx="1.8" transform="rotate(40 4.3 3.6)" fill="none" stroke="#fff" stroke-width="1.6"/><rect x="5.7" y="6.6" width="6" height="3.6" rx="1.8" transform="rotate(40 8.7 8.4)" fill="none" stroke="#fff" stroke-width="1.6"/><path d="M5.6 4.9l1.8 1.9" stroke="#fff" stroke-width="1.4"/></svg></div>
<div class="a" style="left:1806px;top:458px;width:22px;height:22px;background:#56adf5;border-radius:3px"><svg style="left:5px;top:5px" width="12" height="12" viewBox="0 0 12 12"><path d="M1 9l7.5-7.5 2 2L3 11H1z" fill="#fff"/><path d="M7.5 2.5l2 2" stroke="#56adf5" stroke-width=".6"/></svg></div>
<div class="a" style="left:1832px;top:458px;width:21px;height:22px;background:#e74c3c;border-radius:3px"><svg style="left:6px;top:5px" width="10" height="11" viewBox="0 0 10 11"><path d="M0 2h10M3.5 2V.8h3V2" stroke="#fff" stroke-width="1.3" fill="none"/><path d="M1 3h8l-.6 8H1.6z" fill="#fff"/><path d="M3.3 4.5v5M5 4.5v5M6.7 4.5v5" stroke="#f0a8a0" stroke-width=".8"/></svg></div>
<svg style="left:536px;top:501px" width="30" height="30" viewBox="0 0 30 30"><defs><filter id="bl" x="-5%" y="-5%" width="110%" height="110%"><feGaussianBlur stdDeviation=".5"/></filter><clipPath id="cp"><rect width="30" height="30"/></clipPath></defs><g clip-path="url(#cp)"><rect width="30" height="30" fill="#dcdee2"/><g filter="url(#bl)"><rect x="0" y="0" width="11" height="30" fill="#e3e5e7"/><path d="M0 0h11l-1 10c-3 0-7-1-10-3z" fill="#ecebe8"/><ellipse cx="4.6" cy="6.6" rx="1.3" ry="1.7" fill="#74543f"/><path d="M23 3.2c1.5-1.4 3.8-1.8 6-.6l1 4.4c-1.3-.3-2.4-.8-3.3-.4l-1.4 1-1.2-2.5z" fill="#5db044"/><path d="M13.6 0h4.6l.6 7h-2.4z" fill="#7e5a48"/><ellipse cx="14.8" cy="3.1" rx="2.5" ry="3" fill="#ddbcad"/><path d="M9.4 8h12.8l.4 9.6H9z" fill="#e3d0c7"/><path d="M10.2 8.6l5.4 5.6 5.8-5.6-.4 8.8H10.6z" fill="#b2acc1"/><path d="M10.5 17.5h10.2v6.2H10.5z" fill="#e4d2c9"/><path d="M11 23.6h9.4l-1.2 6.4h-7z" fill="#b3adc2"/><path d="M7.8 16c1.8-.6 3.4-.3 4.6.7l1 8.3c-1.8.6-4 .4-5.4-.6z" fill="#f4f4f5"/><path d="M19.8 14.8c2.8-.7 5.7-.9 8.6 0v7c-2.8 0-5.8-.4-8.6-1.4z" fill="#f3f3f4"/><circle cx="26.8" cy="16.6" r="1.3" fill="#ddbcad"/></g></g></svg>
<div class="a" style="left:1751px;top:505px;width:24px;height:22px;background:#56adf5;border-radius:3px"><svg style="left:6px;top:6px" width="12" height="9" viewBox="0 0 12 9"><rect x="0" y="0" width="12" height="9" rx="2.2" fill="#fff"/><path d="M5 2.8v3.4l2.8-1.7z" fill="#56adf5"/></svg></div>
<div class="a" style="left:1779px;top:505px;width:23px;height:22px;background:#2c3b4e;border-radius:3px"><svg style="left:5px;top:5px" width="13" height="12" viewBox="0 0 13 12"><rect x="1.3" y="1.8" width="6" height="3.6" rx="1.8" transform="rotate(40 4.3 3.6)" fill="none" stroke="#fff" stroke-width="1.6"/><rect x="5.7" y="6.6" width="6" height="3.6" rx="1.8" transform="rotate(40 8.7 8.4)" fill="none" stroke="#fff" stroke-width="1.6"/><path d="M5.6 4.9l1.8 1.9" stroke="#fff" stroke-width="1.4"/></svg></div>
<div class="a" style="left:1806px;top:505px;width:22px;height:22px;background:#56adf5;border-radius:3px"><svg style="left:5px;top:5px" width="12" height="12" viewBox="0 0 12 12"><path d="M1 9l7.5-7.5 2 2L3 11H1z" fill="#fff"/><path d="M7.5 2.5l2 2" stroke="#56adf5" stroke-width=".6"/></svg></div>
<div class="a" style="left:1832px;top:505px;width:21px;height:22px;background:#e74c3c;border-radius:3px"><svg style="left:6px;top:5px" width="10" height="11" viewBox="0 0 10 11"><path d="M0 2h10M3.5 2V.8h3V2" stroke="#fff" stroke-width="1.3" fill="none"/><path d="M1 3h8l-.6 8H1.6z" fill="#fff"/><path d="M3.3 4.5v5M5 4.5v5M6.7 4.5v5" stroke="#f0a8a0" stroke-width=".8"/></svg></div>
<svg style="left:536px;top:548px" width="30" height="30" viewBox="0 0 30 30"><defs><filter id="bl" x="-5%" y="-5%" width="110%" height="110%"><feGaussianBlur stdDeviation=".5"/></filter><clipPath id="cp"><rect width="30" height="30"/></clipPath></defs><g clip-path="url(#cp)"><rect width="30" height="30" fill="#dcdee2"/><g filter="url(#bl)"><rect x="0" y="0" width="11" height="30" fill="#e3e5e7"/><path d="M0 0h11l-1 10c-3 0-7-1-10-3z" fill="#ecebe8"/><ellipse cx="4.6" cy="6.6" rx="1.3" ry="1.7" fill="#74543f"/><path d="M23 3.2c1.5-1.4 3.8-1.8 6-.6l1 4.4c-1.3-.3-2.4-.8-3.3-.4l-1.4 1-1.2-2.5z" fill="#5db044"/><path d="M13.6 0h4.6l.6 7h-2.4z" fill="#7e5a48"/><ellipse cx="14.8" cy="3.1" rx="2.5" ry="3" fill="#ddbcad"/><path d="M9.4 8h12.8l.4 9.6H9z" fill="#e3d0c7"/><path d="M10.2 8.6l5.4 5.6 5.8-5.6-.4 8.8H10.6z" fill="#b2acc1"/><path d="M10.5 17.5h10.2v6.2H10.5z" fill="#e4d2c9"/><path d="M11 23.6h9.4l-1.2 6.4h-7z" fill="#b3adc2"/><path d="M7.8 16c1.8-.6 3.4-.3 4.6.7l1 8.3c-1.8.6-4 .4-5.4-.6z" fill="#f4f4f5"/><path d="M19.8 14.8c2.8-.7 5.7-.9 8.6 0v7c-2.8 0-5.8-.4-8.6-1.4z" fill="#f3f3f4"/><circle cx="26.8" cy="16.6" r="1.3" fill="#ddbcad"/></g></g></svg>
<div class="a" style="left:1751px;top:552px;width:24px;height:22px;background:#56adf5;border-radius:3px"><svg style="left:6px;top:6px" width="12" height="9" viewBox="0 0 12 9"><rect x="0" y="0" width="12" height="9" rx="2.2" fill="#fff"/><path d="M5 2.8v3.4l2.8-1.7z" fill="#56adf5"/></svg></div>
<div class="a" style="left:1779px;top:552px;width:23px;height:22px;background:#2c3b4e;border-radius:3px"><svg style="left:5px;top:5px" width="13" height="12" viewBox="0 0 13 12"><rect x="1.3" y="1.8" width="6" height="3.6" rx="1.8" transform="rotate(40 4.3 3.6)" fill="none" stroke="#fff" stroke-width="1.6"/><rect x="5.7" y="6.6" width="6" height="3.6" rx="1.8" transform="rotate(40 8.7 8.4)" fill="none" stroke="#fff" stroke-width="1.6"/><path d="M5.6 4.9l1.8 1.9" stroke="#fff" stroke-width="1.4"/></svg></div>
<div class="a" style="left:1806px;top:552px;width:22px;height:22px;background:#56adf5;border-radius:3px"><svg style="left:5px;top:5px" width="12" height="12" viewBox="0 0 12 12"><path d="M1 9l7.5-7.5 2 2L3 11H1z" fill="#fff"/><path d="M7.5 2.5l2 2" stroke="#56adf5" stroke-width=".6"/></svg></div>
<div class="a" style="left:1832px;top:552px;width:21px;height:22px;background:#e74c3c;border-radius:3px"><svg style="left:6px;top:5px" width="10" height="11" viewBox="0 0 10 11"><path d="M0 2h10M3.5 2V.8h3V2" stroke="#fff" stroke-width="1.3" fill="none"/><path d="M1 3h8l-.6 8H1.6z" fill="#fff"/><path d="M3.3 4.5v5M5 4.5v5M6.7 4.5v5" stroke="#f0a8a0" stroke-width=".8"/></svg></div>
<svg style="left:536px;top:595px" width="30" height="30" viewBox="0 0 30 30"><defs><filter id="bl" x="-5%" y="-5%" width="110%" height="110%"><feGaussianBlur stdDeviation=".5"/></filter><clipPath id="cp"><rect width="30" height="30"/></clipPath></defs><g clip-path="url(#cp)"><rect width="30" height="30" fill="#dcdee2"/><g filter="url(#bl)"><rect x="0" y="0" width="11" height="30" fill="#e3e5e7"/><path d="M0 0h11l-1 10c-3 0-7-1-10-3z" fill="#ecebe8"/><ellipse cx="4.6" cy="6.6" rx="1.3" ry="1.7" fill="#74543f"/><path d="M23 3.2c1.5-1.4 3.8-1.8 6-.6l1 4.4c-1.3-.3-2.4-.8-3.3-.4l-1.4 1-1.2-2.5z" fill="#5db044"/><path d="M13.6 0h4.6l.6 7h-2.4z" fill="#7e5a48"/><ellipse cx="14.8" cy="3.1" rx="2.5" ry="3" fill="#ddbcad"/><path d="M9.4 8h12.8l.4 9.6H9z" fill="#e3d0c7"/><path d="M10.2 8.6l5.4 5.6 5.8-5.6-.4 8.8H10.6z" fill="#b2acc1"/><path d="M10.5 17.5h10.2v6.2H10.5z" fill="#e4d2c9"/><path d="M11 23.6h9.4l-1.2 6.4h-7z" fill="#b3adc2"/><path d="M7.8 16c1.8-.6 3.4-.3 4.6.7l1 8.3c-1.8.6-4 .4-5.4-.6z" fill="#f4f4f5"/><path d="M19.8 14.8c2.8-.7 5.7-.9 8.6 0v7c-2.8 0-5.8-.4-8.6-1.4z" fill="#f3f3f4"/><circle cx="26.8" cy="16.6" r="1.3" fill="#ddbcad"/></g></g></svg>
<div class="a" style="left:1751px;top:599px;width:24px;height:22px;background:#56adf5;border-radius:3px"><svg style="left:6px;top:6px" width="12" height="9" viewBox="0 0 12 9"><rect x="0" y="0" width="12" height="9" rx="2.2" fill="#fff"/><path d="M5 2.8v3.4l2.8-1.7z" fill="#56adf5"/></svg></div>
<div class="a" style="left:1779px;top:599px;width:23px;height:22px;background:#2c3b4e;border-radius:3px"><svg style="left:5px;top:5px" width="13" height="12" viewBox="0 0 13 12"><rect x="1.3" y="1.8" width="6" height="3.6" rx="1.8" transform="rotate(40 4.3 3.6)" fill="none" stroke="#fff" stroke-width="1.6"/><rect x="5.7" y="6.6" width="6" height="3.6" rx="1.8" transform="rotate(40 8.7 8.4)" fill="none" stroke="#fff" stroke-width="1.6"/><path d="M5.6 4.9l1.8 1.9" stroke="#fff" stroke-width="1.4"/></svg></div>
<div class="a" style="left:1806px;top:599px;width:22px;height:22px;background:#56adf5;border-radius:3px"><svg style="left:5px;top:5px" width="12" height="12" viewBox="0 0 12 12"><path d="M1 9l7.5-7.5 2 2L3 11H1z" fill="#fff"/><path d="M7.5 2.5l2 2" stroke="#56adf5" stroke-width=".6"/></svg></div>
<div class="a" style="left:1832px;top:599px;width:21px;height:22px;background:#e74c3c;border-radius:3px"><svg style="left:6px;top:5px" width="10" height="11" viewBox="0 0 10 11"><path d="M0 2h10M3.5 2V.8h3V2" stroke="#fff" stroke-width="1.3" fill="none"/><path d="M1 3h8l-.6 8H1.6z" fill="#fff"/><path d="M3.3 4.5v5M5 4.5v5M6.7 4.5v5" stroke="#f0a8a0" stroke-width=".8"/></svg></div>
<svg style="left:536px;top:642px" width="30" height="30" viewBox="0 0 30 30"><defs><filter id="bl" x="-5%" y="-5%" width="110%" height="110%"><feGaussianBlur stdDeviation=".5"/></filter><clipPath id="cp"><rect width="30" height="30"/></clipPath></defs><g clip-path="url(#cp)"><rect width="30" height="30" fill="#dcdee2"/><g filter="url(#bl)"><rect x="0" y="0" width="11" height="30" fill="#e3e5e7"/><path d="M0 0h11l-1 10c-3 0-7-1-10-3z" fill="#ecebe8"/><ellipse cx="4.6" cy="6.6" rx="1.3" ry="1.7" fill="#74543f"/><path d="M23 3.2c1.5-1.4 3.8-1.8 6-.6l1 4.4c-1.3-.3-2.4-.8-3.3-.4l-1.4 1-1.2-2.5z" fill="#5db044"/><path d="M13.6 0h4.6l.6 7h-2.4z" fill="#7e5a48"/><ellipse cx="14.8" cy="3.1" rx="2.5" ry="3" fill="#ddbcad"/><path d="M9.4 8h12.8l.4 9.6H9z" fill="#e3d0c7"/><path d="M10.2 8.6l5.4 5.6 5.8-5.6-.4 8.8H10.6z" fill="#b2acc1"/><path d="M10.5 17.5h10.2v6.2H10.5z" fill="#e4d2c9"/><path d="M11 23.6h9.4l-1.2 6.4h-7z" fill="#b3adc2"/><path d="M7.8 16c1.8-.6 3.4-.3 4.6.7l1 8.3c-1.8.6-4 .4-5.4-.6z" fill="#f4f4f5"/><path d="M19.8 14.8c2.8-.7 5.7-.9 8.6 0v7c-2.8 0-5.8-.4-8.6-1.4z" fill="#f3f3f4"/><circle cx="26.8" cy="16.6" r="1.3" fill="#ddbcad"/></g></g></svg>
<div class="a" style="left:1751px;top:646px;width:24px;height:22px;background:#56adf5;border-radius:3px"><svg style="left:6px;top:6px" width="12" height="9" viewBox="0 0 12 9"><rect x="0" y="0" width="12" height="9" rx="2.2" fill="#fff"/><path d="M5 2.8v3.4l2.8-1.7z" fill="#56adf5"/></svg></div>
<div class="a" style="left:1779px;top:646px;width:23px;height:22px;background:#2c3b4e;border-radius:3px"><svg style="left:5px;top:5px" width="13" height="12" viewBox="0 0 13 12"><rect x="1.3" y="1.8" width="6" height="3.6" rx="1.8" transform="rotate(40 4.3 3.6)" fill="none" stroke="#fff" stroke-width="1.6"/><rect x="5.7" y="6.6" width="6" height="3.6" rx="1.8" transform="rotate(40 8.7 8.4)" fill="none" stroke="#fff" stroke-width="1.6"/><path d="M5.6 4.9l1.8 1.9" stroke="#fff" stroke-width="1.4"/></svg></div>
<div class="a" style="left:1806px;top:646px;width:22px;height:22px;background:#56adf5;border-radius:3px"><svg style="left:5px;top:5px" width="12" height="12" viewBox="0 0 12 12"><path d="M1 9l7.5-7.5 2 2L3 11H1z" fill="#fff"/><path d="M7.5 2.5l2 2" stroke="#56adf5" stroke-width=".6"/></svg></div>
<div class="a" style="left:1832px;top:646px;width:21px;height:22px;background:#e74c3c;border-radius:3px"><svg style="left:6px;top:5px" width="10" height="11" viewBox="0 0 10 11"><path d="M0 2h10M3.5 2V.8h3V2" stroke="#fff" stroke-width="1.3" fill="none"/><path d="M1 3h8l-.6 8H1.6z" fill="#fff"/><path d="M3.3 4.5v5M5 4.5v5M6.7 4.5v5" stroke="#f0a8a0" stroke-width=".8"/></svg></div>
<svg style="left:536px;top:689px" width="30" height="30" viewBox="0 0 30 30"><defs><filter id="bl" x="-5%" y="-5%" width="110%" height="110%"><feGaussianBlur stdDeviation=".5"/></filter><clipPath id="cp"><rect width="30" height="30"/></clipPath></defs><g clip-path="url(#cp)"><rect width="30" height="30" fill="#dcdee2"/><g filter="url(#bl)"><rect x="0" y="0" width="11" height="30" fill="#e3e5e7"/><path d="M0 0h11l-1 10c-3 0-7-1-10-3z" fill="#ecebe8"/><ellipse cx="4.6" cy="6.6" rx="1.3" ry="1.7" fill="#74543f"/><path d="M23 3.2c1.5-1.4 3.8-1.8 6-.6l1 4.4c-1.3-.3-2.4-.8-3.3-.4l-1.4 1-1.2-2.5z" fill="#5db044"/><path d="M13.6 0h4.6l.6 7h-2.4z" fill="#7e5a48"/><ellipse cx="14.8" cy="3.1" rx="2.5" ry="3" fill="#ddbcad"/><path d="M9.4 8h12.8l.4 9.6H9z" fill="#e3d0c7"/><path d="M10.2 8.6l5.4 5.6 5.8-5.6-.4 8.8H10.6z" fill="#b2acc1"/><path d="M10.5 17.5h10.2v6.2H10.5z" fill="#e4d2c9"/><path d="M11 23.6h9.4l-1.2 6.4h-7z" fill="#b3adc2"/><path d="M7.8 16c1.8-.6 3.4-.3 4.6.7l1 8.3c-1.8.6-4 .4-5.4-.6z" fill="#f4f4f5"/><path d="M19.8 14.8c2.8-.7 5.7-.9 8.6 0v7c-2.8 0-5.8-.4-8.6-1.4z" fill="#f3f3f4"/><circle cx="26.8" cy="16.6" r="1.3" fill="#ddbcad"/></g></g></svg>
<div class="a" style="left:1751px;top:693px;width:24px;height:22px;background:#56adf5;border-radius:3px"><svg style="left:6px;top:6px" width="12" height="9" viewBox="0 0 12 9"><rect x="0" y="0" width="12" height="9" rx="2.2" fill="#fff"/><path d="M5 2.8v3.4l2.8-1.7z" fill="#56adf5"/></svg></div>
<div class="a" style="left:1779px;top:693px;width:23px;height:22px;background:#2c3b4e;border-radius:3px"><svg style="left:5px;top:5px" width="13" height="12" viewBox="0 0 13 12"><rect x="1.3" y="1.8" width="6" height="3.6" rx="1.8" transform="rotate(40 4.3 3.6)" fill="none" stroke="#fff" stroke-width="1.6"/><rect x="5.7" y="6.6" width="6" height="3.6" rx="1.8" transform="rotate(40 8.7 8.4)" fill="none" stroke="#fff" stroke-width="1.6"/><path d="M5.6 4.9l1.8 1.9" stroke="#fff" stroke-width="1.4"/></svg></div>
<div class="a" style="left:1806px;top:693px;width:22px;height:22px;background:#56adf5;border-radius:3px"><svg style="left:5px;top:5px" width="12" height="12" viewBox="0 0 12 12"><path d="M1 9l7.5-7.5 2 2L3 11H1z" fill="#fff"/><path d="M7.5 2.5l2 2" stroke="#56adf5" stroke-width=".6"/></svg></div>
<div class="a" style="left:1832px;top:693px;width:21px;height:22px;background:#e74c3c;border-radius:3px"><svg style="left:6px;top:5px" width="10" height="11" viewBox="0 0 10 11"><path d="M0 2h10M3.5 2V.8h3V2" stroke="#fff" stroke-width="1.3" fill="none"/><path d="M1 3h8l-.6 8H1.6z" fill="#fff"/><path d="M3.3 4.5v5M5 4.5v5M6.7 4.5v5" stroke="#f0a8a0" stroke-width=".8"/></svg></div>
<svg style="left:536px;top:736px" width="30" height="30"><rect x=".5" y=".5" width="29" height="29" fill="#fff" stroke="#b3b3b3"/><path d="M3 3h9.5l4.5 4.5V17H3z" fill="#cddcf6"/><path d="M4.3 7.3q.3-1.6 2-1.5q.8-1.6 2.4-.6q1.6 0 1.5 2.1z" fill="#fff"/><path d="M3 17Q6 11.5 9.8 11.6Q13.2 11.8 17 15.5V17z" fill="#4dab3c"/><path d="M18.2 9.3L18.6 12.6L12.4 18.6H9.2z" fill="#fff"/><path d="M2.5 17.5V2.5H12.5L17.5 7.5V10.2M17.5 13.2V17.5H12.8M10.2 17.5H2.5" fill="none" stroke="#7d7d7d" stroke-width="1"/><path d="M12.5 2.5V7.5H17.5z" fill="#fff" stroke="#7d7d7d" stroke-width="1" stroke-linejoin="round"/></svg>
<div class="a" style="left:1751px;top:740px;width:24px;height:22px;background:#56adf5;border-radius:3px"><svg style="left:6px;top:6px" width="12" height="9" viewBox="0 0 12 9"><rect x="0" y="0" width="12" height="9" rx="2.2" fill="#fff"/><path d="M5 2.8v3.4l2.8-1.7z" fill="#56adf5"/></svg></div>
<div class="a" style="left:1779px;top:740px;width:23px;height:22px;background:#2c3b4e;border-radius:3px"><svg style="left:5px;top:5px" width="13" height="12" viewBox="0 0 13 12"><rect x="1.3" y="1.8" width="6" height="3.6" rx="1.8" transform="rotate(40 4.3 3.6)" fill="none" stroke="#fff" stroke-width="1.6"/><rect x="5.7" y="6.6" width="6" height="3.6" rx="1.8" transform="rotate(40 8.7 8.4)" fill="none" stroke="#fff" stroke-width="1.6"/><path d="M5.6 4.9l1.8 1.9" stroke="#fff" stroke-width="1.4"/></svg></div>
<div class="a" style="left:1806px;top:740px;width:22px;height:22px;background:#56adf5;border-radius:3px"><svg style="left:5px;top:5px" width="12" height="12" viewBox="0 0 12 12"><path d="M1 9l7.5-7.5 2 2L3 11H1z" fill="#fff"/><path d="M7.5 2.5l2 2" stroke="#56adf5" stroke-width=".6"/></svg></div>
<div class="a" style="left:1832px;top:740px;width:21px;height:22px;background:#e74c3c;border-radius:3px"><svg style="left:6px;top:5px" width="10" height="11" viewBox="0 0 10 11"><path d="M0 2h10M3.5 2V.8h3V2" stroke="#fff" stroke-width="1.3" fill="none"/><path d="M1 3h8l-.6 8H1.6z" fill="#fff"/><path d="M3.3 4.5v5M5 4.5v5M6.7 4.5v5" stroke="#f0a8a0" stroke-width=".8"/></svg></div>
</body></html>
